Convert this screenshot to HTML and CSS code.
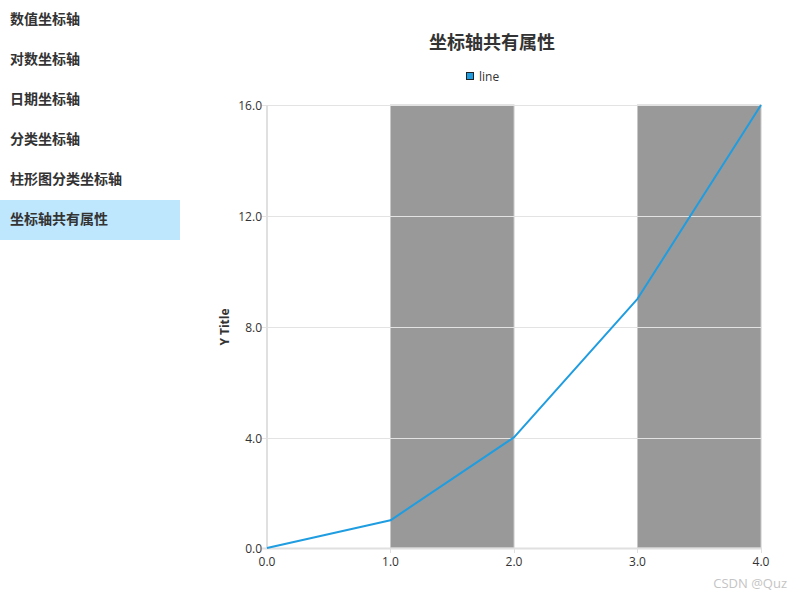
FILE: index.html
```html
<!DOCTYPE html>
<html>
<head>
<meta charset="utf-8">
<link rel="stylesheet" href="styles.css">
</head>
<body>
<div class="page">
  <nav class="sidebar">
    <div class="item">数值坐标轴</div>
    <div class="item">对数坐标轴</div>
    <div class="item">日期坐标轴</div>
    <div class="item">分类坐标轴</div>
    <div class="item">柱形图分类坐标轴</div>
    <div class="item active">坐标轴共有属性</div>
  </nav>
  <main class="chart">
    <svg class="chart-svg" width="620" height="600" viewBox="180 0 620 600">
      <text class="title" x="492" y="49" text-anchor="middle">坐标轴共有属性</text>
      <rect x="466.5" y="72.5" width="7" height="7" fill="#1f9de0" stroke="#222" stroke-width="1"/>
      <text class="legend" x="479" y="80.5">line</text>
      <rect x="390.5" y="105" width="123.5" height="443" fill="#999999" stroke="#c8c8c8" stroke-width="1"/>
      <rect x="637.5" y="105" width="123.5" height="443" fill="#999999" stroke="#c8c8c8" stroke-width="1"/>
      <g stroke="#e3e3e3" stroke-width="1">
        <line x1="262" y1="105.5" x2="762" y2="105.5"/>
        <line x1="262" y1="216.5" x2="762" y2="216.5"/>
        <line x1="262" y1="327.5" x2="762" y2="327.5"/>
        <line x1="262" y1="438.5" x2="762" y2="438.5"/>
      </g>
      <g stroke="#e0e0e0" stroke-width="2">
        <line x1="267" y1="105" x2="267" y2="549"/>
        <line x1="262" y1="548.5" x2="762" y2="548.5"/>
      </g>
      <g stroke="#e0e0e0" stroke-width="1">
        <line x1="390.5" y1="548" x2="390.5" y2="553"/>
        <line x1="514.5" y1="548" x2="514.5" y2="553"/>
        <line x1="637.5" y1="548" x2="637.5" y2="553"/>
        <line x1="761.5" y1="548" x2="761.5" y2="553"/>
      </g>
      <polyline fill="none" stroke="#1f9de0" stroke-width="2" stroke-linejoin="round"
        points="267,548 390.5,520.3 514,437.3 637.5,298.8 761,105"/>
      <g class="tick" text-anchor="end">
        <text x="262" y="110">16.0</text>
        <text x="262" y="221">12.0</text>
        <text x="262" y="332">8.0</text>
        <text x="262" y="443">4.0</text>
        <text x="262" y="553">0.0</text>
      </g>
      <g class="tick" text-anchor="middle">
        <text x="267" y="566">0.0</text>
        <text x="390.5" y="566">1.0</text>
        <text x="514" y="566">2.0</text>
        <text x="637.5" y="566">3.0</text>
        <text x="761" y="566">4.0</text>
      </g>
      <text class="ytitle" x="0" y="0" text-anchor="middle" transform="translate(229 327) rotate(-90)">Y Title</text>
      <text class="watermark" x="787" y="588" text-anchor="end">CSDN @Quz</text>
    </svg>
  </main>
</div>
</body>
</html>
```
FILE: styles.css
```css
* { box-sizing: border-box; }
html, body { margin: 0; padding: 0; background: #fff; }
body { font-family: "Noto Sans", "Noto Sans CJK SC", sans-serif; color: #333; }
.page { display: flex; width: 800px; height: 600px; overflow: hidden; }
.sidebar { width: 180px; flex: none; display: flex; flex-direction: column; }
.item {
  height: 40px;
  line-height: 36px;
  padding-left: 10px;
  font-family: "Noto Sans CJK SC", sans-serif;
  font-size: 14px;
  font-weight: bold;
  color: #333;
}
.item.active { background: #bee6fd; }
.chart { flex: 1; }
.chart-svg { display: block; }
.title { font-family: "Noto Sans CJK SC", sans-serif; font-size: 18px; font-weight: bold; fill: #333; }
.legend { font-family: "Open Sans", "Noto Sans", sans-serif; font-size: 12px; fill: #333; }
.tick text { font-family: "Open Sans", "Noto Sans", sans-serif; font-size: 12px; fill: #333; }
.ytitle { font-family: "Open Sans", "Noto Sans", sans-serif; font-size: 12px; font-weight: bold; fill: #333; }
.watermark { font-family: "Open Sans", "Noto Sans", sans-serif; font-size: 13px; fill: #c4c4c4; }
```
